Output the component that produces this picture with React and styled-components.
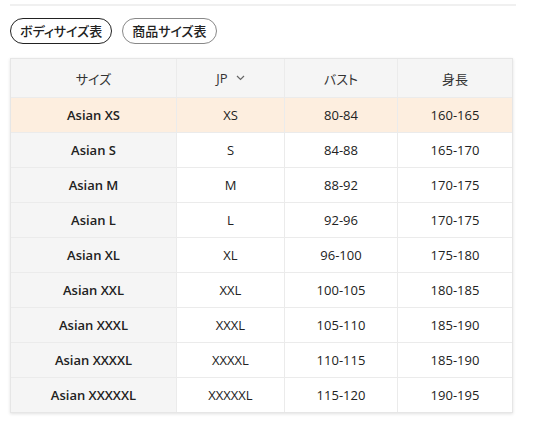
import React from "react";
import styled, { createGlobalStyle } from "styled-components";

const GlobalStyle = createGlobalStyle`
  body {
    margin: 0;
    background: #fff;
    font-family: "Open Sans", "Noto Sans CJK JP", sans-serif;
    color: #222;
  }
`;

const Page = styled.div`
  width: 534px;
  height: 436px;
  padding: 4px 21px 0 10px;
  box-sizing: border-box;
`;

const TopRule = styled.div`
  height: 2px;
  background: #f0f0f0;
  margin-right: -3px;
`;

const Tabs = styled.div`
  display: flex;
  gap: 10px;
  margin-top: 12px;
`;

const Tab = styled.button`
  height: 26px;
  padding: 0 9px;
  border-radius: 13px;
  border: 1px solid ${(p) => (p.$active ? "#222" : "#888")};
  background: #fff;
  font-family: "Noto Sans CJK JP", sans-serif;
  font-feature-settings: "palt";
  font-size: 13px;
  font-weight: 500;
  color: #222;
  line-height: 24px;
  cursor: pointer;
`;

const Table = styled.div`
  margin-top: 14px;
  border: 1px solid #e6e6e6;
  box-shadow: 0 1px 3px rgba(0, 0, 0, 0.12);
  display: grid;
  grid-template-columns: 166px 108px 113px 1fr;
`;

const Cell = styled.div`
  height: ${(p) => (p.$head ? "38px" : "35px")};
  display: flex;
  align-items: center;
  justify-content: center;
  gap: 8px;
  font-size: 13px;
  font-feature-settings: "palt";
  font-weight: ${(p) => (p.$bold ? 600 : 400)};
  color: ${(p) => (p.$head ? "#333" : "#222")};
  background: ${(p) => p.$bg};
  border-right: ${(p) => (p.$last ? "none" : "1px solid #ebebeb")};
  border-top: ${(p) => (p.$head ? "none" : "1px solid #ebebeb")};
  box-sizing: border-box;
`;

const Chevron = () => (
  <svg width="9" height="6" viewBox="0 0 9 6" fill="none">
    <path d="M1 1l3.5 3.5L8 1" stroke="#666" strokeWidth="1.2" />
  </svg>
);

const rows = [
  ["Asian XS", "XS", "80-84", "160-165"],
  ["Asian S", "S", "84-88", "165-170"],
  ["Asian M", "M", "88-92", "170-175"],
  ["Asian L", "L", "92-96", "170-175"],
  ["Asian XL", "XL", "96-100", "175-180"],
  ["Asian XXL", "XXL", "100-105", "180-185"],
  ["Asian XXXL", "XXXL", "105-110", "185-190"],
  ["Asian XXXXL", "XXXXL", "110-115", "185-190"],
  ["Asian XXXXXL", "XXXXXL", "115-120", "190-195"],
];

export default function App() {
  return (
    <>
      <GlobalStyle />
      <Page>
        <TopRule />
        <Tabs>
          <Tab $active>ボディサイズ表</Tab>
          <Tab>商品サイズ表</Tab>
        </Tabs>
        <Table>
          <Cell $head $bg="#f5f5f5">サイズ</Cell>
          <Cell $head $bg="#f5f5f5">
            JP <Chevron />
          </Cell>
          <Cell $head $bg="#f5f5f5">バスト</Cell>
          <Cell $head $last $bg="#f5f5f5">身長</Cell>
          {rows.map((r, i) => {
            const hl = i === 0;
            return r.map((v, j) => (
              <Cell
                key={`${i}-${j}`}
                $bold={j === 0}
                $last={j === 3}
                $bg={hl ? "#fdeedf" : j === 0 ? "#f5f5f5" : "#fff"}
              >
                {v}
              </Cell>
            ));
          })}
        </Table>
      </Page>
    </>
  );
}
